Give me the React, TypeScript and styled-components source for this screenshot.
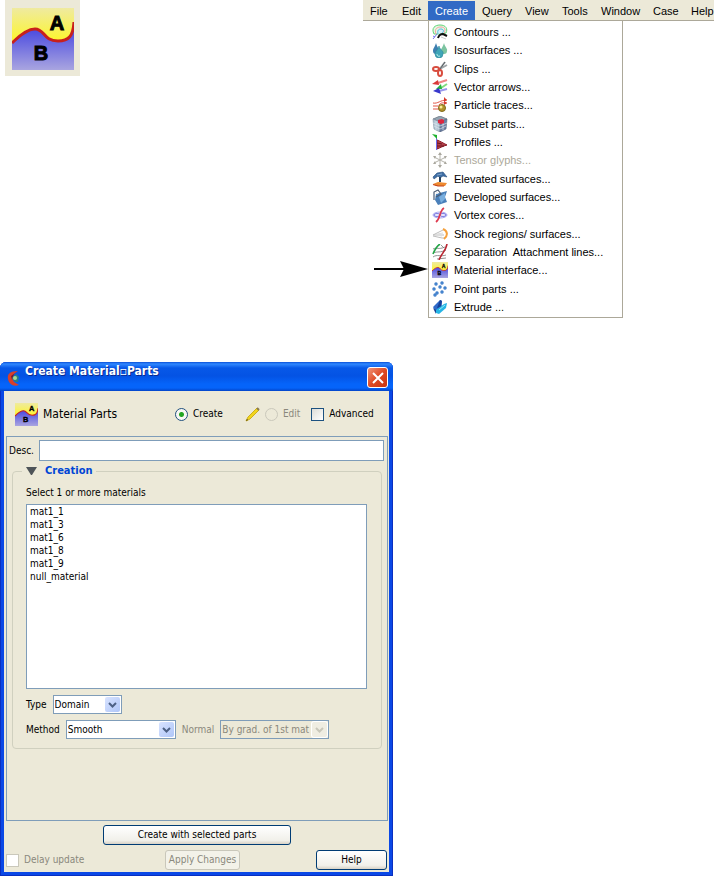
import React from "react";
import styled, { createGlobalStyle, css } from "styled-components";

const menuFont = `"Liberation Sans", Arial, sans-serif`;
const dialogFont = `"DejaVu Sans Condensed", "DejaVu Sans", sans-serif`;

const GlobalStyle = createGlobalStyle`
  * { box-sizing: border-box; }
  body {
    margin: 0;
    background: #fff;
    color: #000;
    font-family: ${menuFont};
    font-size: 11px;
    line-height: 14px;
  }
  button, input, select, option { font: inherit; color: inherit; }
`;

/* ---------- Icons ---------- */

const MaterialIcon = ({ size }: { size: number }) => (
  <svg width={size} height={size} viewBox="0 0 62 62" aria-hidden="true">
    <defs>
      <linearGradient id={`sky${size}`} x1="0" y1="0" x2="0" y2="1">
        <stop offset="0" stopColor="#efeaa0" />
        <stop offset="0.5" stopColor="#fcf534" />
      </linearGradient>
      <linearGradient id={`sea${size}`} x1="0" y1="0" x2="0" y2="1">
        <stop offset="0" stopColor="#3a3ae0" />
        <stop offset="1" stopColor="#a9a5e0" />
      </linearGradient>
    </defs>
    <rect width="62" height="62" fill={`url(#sky${size})`} />
    <path d="M0 35C9 26 16 21 23 21C33 21 31 33 46 33C57 33 61 28 62 14V62H0Z" fill={`url(#sea${size})`} />
    <path d="M0 35C9 26 16 21 23 21C33 21 31 33 46 33C57 33 61 28 62 14" fill="none" stroke="#c8201c" strokeWidth="3" />
    <text x="45" y="22" textAnchor="middle" fontFamily="Liberation Sans, sans-serif" fontWeight="700" fontSize="20" stroke="#000">A</text>
    <text x="29" y="52" textAnchor="middle" fontFamily="Liberation Sans, sans-serif" fontWeight="700" fontSize="20" stroke="#000">B</text>
  </svg>
);

const Glyph = ({ children }: { children: React.ReactNode }) => (
  <svg width="16" height="16" viewBox="0 0 16 16" fill="none" aria-hidden="true">
    {children}
  </svg>
);

const icons: Record<string, React.ReactNode> = {
  contours: (
    <Glyph>
      <path d="M2 10C-1 4 3 1 8 1C14 1 16 5 14 9L9 10Z" fill="#e4f9e4" stroke="#62d478" />
      <path d="M4 10C2 5 5 3 9 3C13 3 14 6 12 9" stroke="#f4a0a0" />
      <path d="M6 10C5 6 7 5 9 5C12 5 12 8 10 9" fill="#d7f0fb" stroke="#4db8e4" />
      <path d="M1 15L5 10M3 13L1 12" stroke="#7474ee" />
      <path d="M6 14C7 11 9 10 11 10L15 12" stroke="#111" strokeWidth="2" />
      <path d="M9 13L14 15" stroke="#ccc" />
    </Glyph>
  ),
  iso: (
    <Glyph>
      <path d="M4 1C5 5 7 6 7 9A3 3 0 0 1 1 9C1 6 3 5 4 1Z" fill="#3d7fb0" />
      <path d="M12 1C13 5 16 7 15 9A3 3 0 0 1 9 9C9 6 11 5 12 1Z" fill="#7cc4a0" />
      <path d="M7 4C8 8 12 9 11 12A4 4 0 0 1 3 12C3 9 6 8 7 4Z" fill="#3fa5b8" stroke="#2f8499" strokeWidth=".6" />
      <path d="M5 12A2 2 0 0 0 8 14" stroke="#b2ece8" />
    </Glyph>
  ),
  clips: (
    <Glyph>
      <path d="M13 1L7 9M15 4L6 9" stroke="#9ea4a7" strokeWidth="2" />
      <path d="M13 1L8 8" stroke="#596064" />
      <ellipse cx="4" cy="8" rx="3" ry="2" stroke="#d84c3e" strokeWidth="2" />
      <ellipse cx="8" cy="12" rx="2" ry="3" stroke="#d84c3e" strokeWidth="2" />
    </Glyph>
  ),
  vector: (
    <Glyph>
      <path d="M15 1L6 4" stroke="#ef8585" strokeWidth="2" />
      <path d="M0 5L6 1L7 6Z" fill="#d93939" />
      <path d="M15 5L9 9" stroke="#80dc80" strokeWidth="2" />
      <path d="M4 10L9 5L10 10Z" fill="#25b440" />
      <path d="M15 10L7 12" stroke="#9898ec" strokeWidth="2" />
      <path d="M1 12L7 9L9 15Z" fill="#3838cc" />
    </Glyph>
  ),
  particle: (
    <Glyph>
      <path d="M1 6C6 7 8 3 15 3M1 9H7M1 12H7M7 8C9 5 12 6 15 6" stroke="#e15445" />
      <path d="M12 0L15 3L12 5M12 4L15 6L12 8" fill="#d63a2d" />
      <circle cx="10" cy="11" r="3.5" fill="#b0922a" stroke="#806a1a" />
      <circle cx="9" cy="10" r="1.5" fill="#f8ec94" />
    </Glyph>
  ),
  subset: (
    <Glyph>
      <path d="M1 3L8 0L15 3L8 6Z" fill="#93a3b0" stroke="#526270" strokeWidth=".6" />
      <path d="M1 3L8 6V16L2 13Z" fill="#b3c5d4" stroke="#7e8da0" strokeWidth=".6" />
      <path d="M8 6L15 3L14 13L8 16Z" fill="#6c7fa4" stroke="#50617c" strokeWidth=".6" />
      <path d="M1 7L8 10L15 7M2 10L8 13L14 10M4 5V14M11 5V14" stroke="#dbe5ed" strokeWidth=".7" />
      <path d="M6 4L10 3L12 4V7L9 8L6 7Z" fill="#dd2740" />
    </Glyph>
  ),
  profiles: (
    <Glyph>
      <path d="M5 6C8 7 11 9 15 11C11 12 8 14 5 15Z" fill="#b4404a" stroke="#8a1d28" />
      <path d="M5 9L10 10M5 12H12" stroke="#6d1720" />
      <path d="M4.5 1V16" stroke="#6a6af0" />
      <path d="M0 0L5 1V5Z" fill="#1eb12e" />
    </Glyph>
  ),
  tensor: (
    <Glyph>
      <path d="M8 1V15M2 5L14 11M14 5L2 11" stroke="#b5b3ab" />
      <path d="M6 3L8 0L10 3ZM6 13L8 16L10 13ZM1 4L4 4L3 7ZM15 4L12 4L13 7ZM1 12L3 9L4 12ZM15 12L13 9L12 12Z" fill="#aaa89f" />
    </Glyph>
  ),
  elevated: (
    <Glyph>
      <path d="M1 6L5 2L11 1L15 6L11 5L8 7L6 5L2 8Z" fill="#3f6ea4" stroke="#254d7c" strokeWidth=".6" />
      <path d="M5 4L10 3" stroke="#7fa6cf" />
      <path d="M8 6V11" stroke="#26425f" strokeWidth="2" />
      <path d="M1 13L6 11L15 12L13 15H4Z" fill="#ee8a30" />
      <path d="M1 13.5L6 15H12" stroke="#c4431d" strokeWidth="1.2" />
    </Glyph>
  ),
  developed: (
    <Glyph>
      <path d="M4 5L15 2L13 8L15 13L6 16L3 11Z" fill="#4a80ba" />
      <path d="M7 8L13 4V10L9 14Z" fill="#79aede" />
      <path d="M2 11V3L6 1L9 5L4 8" stroke="#4a5c76" strokeWidth="1.2" />
      <circle cx="5" cy="4" r="1" fill="#eee" />
    </Glyph>
  ),
  vortex: (
    <Glyph>
      <ellipse cx="8" cy="8" rx="7" ry="3" fill="#eeeefe" stroke="#a8a8f2" />
      <ellipse cx="5" cy="8" rx="3" ry="1.5" stroke="#7a7ade" />
      <ellipse cx="11" cy="8" rx="3" ry="1.5" stroke="#7a7ade" />
      <path d="M12 1C7 4 9 11 4 15" stroke="#df3a4f" strokeWidth="1.7" />
    </Glyph>
  ),
  shock: (
    <Glyph>
      <path d="M1 9L11 4M1 9H12M1 10L10 12H13" stroke="#bcbcbc" />
      <path d="M5 8L11 7M4 9L10 10" stroke="#ddd" />
      <path d="M11 3C16 5 16 10 12 13" stroke="#f5a13d" strokeWidth="2" />
    </Glyph>
  ),
  separation: (
    <Glyph>
      <path d="M1 5C5 3 6 6 13 3M1 9C6 7 8 9 14 6M1 13C5 10 9 13 14 11M5 15L14 14M9 1L12 4" stroke="#777" strokeWidth=".8" />
      <path d="M1 10C3 5 5 2 8 0" stroke="#23a447" strokeWidth="1.6" />
      <path d="M15 0C14 7 9 10 7 16" stroke="#b92531" strokeWidth="1.6" />
    </Glyph>
  ),
  material: <MaterialIcon size={16} />,
  points: (
    <Glyph>
      {[[4, 3], [10, 2], [2, 8], [8, 6], [13, 7], [5, 12], [10, 11], [3, 14]].map(([x, y]) => (
        <g key={`${x}-${y}`}>
          <circle cx={x} cy={y} r="1.7" fill="#3375c5" />
          <circle cx={x} cy={y} r=".6" fill="#82b7ee" />
        </g>
      ))}
    </Glyph>
  ),
  extrude: (
    <Glyph>
      <path d="M1 8L8 1C11 0 9 6 10 7L4 13Z" fill="#2f69c8" />
      <path d="M8 1L10 2L9 8L5 9Z" fill="#163f99" />
      <path d="M4 11L12 5L15 4L14 9L7 15L4 14Z" fill="#25b5e5" />
      <path d="M1 9L4 11V15Z" fill="#153f91" />
      <path d="M7 11L13 6" stroke="#9aeaf5" />
    </Glyph>
  ),
};

const Arrow = () => (
  <svg width="54" height="16" viewBox="0 0 54 16" aria-hidden="true">
    <path d="M0 8H30" stroke="#000" strokeWidth="2" />
    <path d="M26 0L54 8L26 16L30 8Z" />
  </svg>
);

const Pencil = () => (
  <svg width="15" height="15" viewBox="0 0 15 15" aria-hidden="true">
    <path d="M1 14L3 10L12 1L14 3L5 12Z" fill="#f2d51d" stroke="#cdb01c" />
    <path d="M1 14L2 12L3 13Z" fill="#403616" />
    <path d="M12 1L14 3" stroke="#887a50" strokeWidth="2" />
  </svg>
);

const AppMark = () => (
  <svg width="13" height="17" viewBox="0 0 13 17" aria-hidden="true">
    <path d="M11 1C3 1 0 4 1 9C2 14 6 17 12 15L7 12L5 8L7 4Z" fill="#d8402a" />
    <path d="M11 1L4 6L5 10L7 4Z" fill="#701d31" />
    <path d="M5 8L9 4L12 7L11 12L8 12Z" fill="#287f83" />
    <circle cx="8" cy="8" r="2" fill="#a6d995" />
  </svg>
);

const Chevron = () => (
  <svg width="9" height="6" viewBox="0 0 9 6" fill="none" aria-hidden="true">
    <path d="M1 1L4.5 4.5L8 1" stroke="currentColor" strokeWidth="2" />
  </svg>
);

/* ---------- Menu ---------- */

const Page = styled.main`
  display: flex;
  flex-direction: column;
  gap: 44px;
`;

const TopArea = styled.section`
  display: grid;
  grid-template-columns: 358px 1fr;
  align-items: start;
  padding-left: 5px;
`;

const IconTile = styled.div`
  display: grid;
  justify-content: start;
  width: 75px;
  padding: 8px 7px 6px;
  background: #ece9d8;
`;

const MenuBar = styled.nav`
  display: grid;
  grid-template-columns: 32fr 33fr 47fr 43fr 37fr 39fr 52fr 38fr 30fr;
  height: 21px;
  padding-top: 1px;
  background: #ece9d8;
  border-bottom: 1px solid #aca899;
`;

const MenuTitle = styled.button<{ $open?: boolean }>`
  min-width: 0;
  padding: 0 0 0 7px;
  border: 0;
  text-align: left;
  white-space: nowrap;
  background: ${(p) => (p.$open ? "#316ac5" : "transparent")};
  color: ${(p) => (p.$open ? "#fff" : "#000")};
`;

const MenuDrop = styled.div`
  display: flex;
  align-items: flex-end;
  padding-left: 11px;
`;

const ArrowSlot = styled.div`
  display: flex;
  padding-bottom: 41px;
`;

const MenuList = styled.div`
  display: grid;
  grid-auto-rows: 1fr;
  width: 195px;
  height: 297px;
  padding: 2px 0 1px;
  border: solid #aca899;
  border-width: 0 1px 1px;
`;

const MenuEntry = styled.button`
  display: flex;
  align-items: center;
  gap: 6px;
  min-height: 0;
  padding: 0 0 0 3px;
  border: 0;
  background: none;
  white-space: pre;
  text-align: left;
  &:disabled { color: #aca899; }
`;

/* ---------- Dialog ---------- */

const Dialog = styled.section`
  width: 100%;
  max-width: 393px;
  padding: 0 4px 4px;
  border-radius: 6px 6px 0 0;
  background: #0a48e6;
  box-shadow: inset 1px 0 #0a2fc0, inset -1px -1px #0a2fc0;
  font-family: ${dialogFont};
  font-size: 10px;
`;

const TitleBar = styled.header`
  display: flex;
  align-items: center;
  height: 29px;
  margin: 0 -4px;
  padding: 0 5px 0 7px;
  border-radius: 6px 6px 0 0;
  background: linear-gradient(#0a50d8, #3088ff 2px, #0758e8 6px, #0453e4 14px, #0564fa 22px, #0564fa 26px, #0344c8);
`;

const AppMarkSlot = styled.span`
  display: flex;
  padding-top: 3px;
`;

const Title = styled.h1`
  flex: 1;
  margin: 0;
  padding: 0 0 12px 5px;
  color: #fff;
  font-size: 12px;
  font-weight: 700;
  line-height: 16px;
  text-shadow: 1px 1px #0a2a90;
`;

const CloseButton = styled.button`
  display: grid;
  place-items: center;
  width: 21px;
  height: 21px;
  margin-top: 2px;
  padding: 0;
  border: 1px solid #fff;
  border-radius: 3px;
  background: linear-gradient(135deg, #f09478, #df4a25 50%, #c9350f);
`;

const Body = styled.div`
  padding: 11px 1px 2px 2px;
  background: #ece9d8;
`;

const Options = styled.div`
  display: flex;
  align-items: center;
  height: 24px;
  padding-left: 9px;
`;

const PartName = styled.h2`
  width: 137px;
  margin: 0;
  padding-left: 5px;
  font-size: 12px;
  font-weight: 400;
`;

const Choice = styled.label<{ $dim?: boolean; $gap?: number }>`
  display: flex;
  align-items: center;
  gap: 5px;
  margin-right: ${(p) => p.$gap ?? 0}px;
  color: ${(p) => (p.$dim ? "#8a887c" : "#000")};
`;

const PencilSlot = styled.span`
  display: flex;
  padding-right: 5px;
`;

const Radio = styled.input`
  appearance: none;
  width: 13px;
  height: 13px;
  margin: 0;
  border: 1px solid #21517f;
  border-radius: 50%;
  background: #f8f8f4;
  &:checked { background: radial-gradient(circle, #22a522 0 2px, #f8f8f4 3px); }
  &:disabled { border-color: #cac8bb; background: #ece9d8; }
`;

const Tick = styled.input`
  appearance: none;
  width: 13px;
  height: 13px;
  margin: 0;
  border: 1px solid #1c5180;
  background: linear-gradient(135deg, #dcdcd7, #fff);
  &:disabled { border-color: #cac8bb; background: #fff; }
`;

const Panel = styled.div`
  display: flex;
  flex-direction: column;
  min-height: 385px;
  margin-top: 10px;
  padding: 3px 3px 0 2px;
  border: 1px solid #7f9db9;
`;

const DescRow = styled.label`
  display: flex;
  align-items: center;
  gap: 5px;
`;

const DescInput = styled.input`
  flex: 1;
  min-width: 0;
  height: 21px;
  border: 1px solid #7f9db9;
  background: #fff;
`;

const Group = styled.fieldset`
  min-width: 0;
  margin: 3px 2px 0 3px;
  padding: 8px 14px 9px 13px;
  border: 1px solid #d0d0bf;
  border-radius: 4px;
`;

const GroupTitle = styled.legend`
  margin-left: -4px;
  padding: 0 3px 0 4px;
`;

const Toggle = styled.button`
  display: flex;
  align-items: center;
  gap: 8px;
  padding: 0;
  border: 0;
  background: none;
  color: #0046d5;
  font-size: 11px;
  font-weight: 700;
`;

const FieldLabel = styled.label<{ $dim?: boolean }>`
  color: ${(p) => (p.$dim ? "#8a887c" : "#000")};
`;

const MaterialList = styled.select`
  display: block;
  width: 100%;
  height: 185px;
  margin-top: 4px;
  padding: 1px 3px;
  border: 1px solid #7f9db9;
  border-radius: 0;
  background: #fff;
  overflow: hidden;
  option { min-height: 13px; padding: 0; }
`;

const FieldRow = styled.div`
  display: flex;
  align-items: center;
  gap: 6px;
  margin-top: 6px;
`;

const Picker = styled.span<{ $width: number; $off?: boolean }>`
  display: grid;
  grid-template-columns: 1fr 18px;
  align-items: center;
  width: ${(p) => p.$width}px;
  height: 19px;
  border: 1px solid #7f9db9;
  background: ${(p) => (p.$off ? "#ece9d8" : "#fff")};
  > select {
    grid-area: 1 / 1 / 2 / 3;
    appearance: none;
    width: 100%;
    height: 17px;
    padding: 0 16px 0 1px;
    border: 0;
    border-radius: 0;
    background: transparent;
    opacity: 1;
    color: ${(p) => (p.$off ? "#8a887c" : "#000")};
  }
`;

const PickerArrow = styled.span<{ $off?: boolean }>`
  display: grid;
  place-items: center;
  grid-area: 1 / 2;
  width: 15px;
  height: 15px;
  margin-left: 2px;
  border-radius: 2px;
  pointer-events: none;
  ${(p) =>
    p.$off
      ? css`background: #efede2; color: #c9c7ba; box-shadow: 0 0 0 1px #fff;`
      : css`background: linear-gradient(135deg, #d8e3ff, #afc6f8); color: #4d6185;`}
`;

const PushButton = styled.button<{ $width: number }>`
  width: ${(p) => p.$width}px;
  height: 20px;
  padding: 0;
  border: 1px solid #003c74;
  border-radius: 3px;
  background: linear-gradient(#fff, #f1f0ea 80%, #d8d2c6);
  white-space: nowrap;
  &:disabled {
    border-color: #c9c7ba;
    background: #f3f2e9;
    color: #8a887c;
  }
`;

const CreateRow = styled.div`
  display: flex;
  justify-content: center;
  padding-top: 4px;
`;

const Footer = styled.footer`
  display: flex;
  align-items: center;
  margin-top: 5px;
  padding-right: 1px;
  > :first-child { width: 159px; margin: 0; }
  > :last-child { margin-left: auto; }
`;

const titles = ["File", "Edit", "Create", "Query", "View", "Tools", "Window", "Case", "Help"];

const entries: { icon: string; text: string; off?: boolean }[] = [
  { icon: "contours", text: "Contours ..." },
  { icon: "iso", text: "Isosurfaces ..." },
  { icon: "clips", text: "Clips ..." },
  { icon: "vector", text: "Vector arrows..." },
  { icon: "particle", text: "Particle traces..." },
  { icon: "subset", text: "Subset parts..." },
  { icon: "profiles", text: "Profiles ..." },
  { icon: "tensor", text: "Tensor glyphs...", off: true },
  { icon: "elevated", text: "Elevated surfaces..." },
  { icon: "developed", text: "Developed surfaces..." },
  { icon: "vortex", text: "Vortex cores..." },
  { icon: "shock", text: "Shock regions/ surfaces..." },
  { icon: "separation", text: "Separation  Attachment lines..." },
  { icon: "material", text: "Material interface..." },
  { icon: "points", text: "Point parts ..." },
  { icon: "extrude", text: "Extrude ..." },
];

const materials = ["mat1_1", "mat1_3", "mat1_6", "mat1_8", "mat1_9", "null_material"];

export default function App() {
  return (
    <Page>
      <GlobalStyle />
      <TopArea>
        <IconTile>
          <MaterialIcon size={62} />
        </IconTile>
        <div>
          <MenuBar>
            {titles.map((t) => (
              <MenuTitle key={t} $open={t === "Create"}>{t}</MenuTitle>
            ))}
          </MenuBar>
          <MenuDrop>
            <ArrowSlot><Arrow /></ArrowSlot>
            <MenuList>
              {entries.map((e) => (
                <MenuEntry key={e.text} disabled={e.off}>
                  {icons[e.icon]}
                  {e.text}
                </MenuEntry>
              ))}
            </MenuList>
          </MenuDrop>
        </div>
      </TopArea>

      <Dialog>
        <TitleBar>
          <AppMarkSlot><AppMark /></AppMarkSlot>
          <Title>Create Material▫Parts</Title>
          <CloseButton aria-label="Close">
            <svg width="12" height="12" viewBox="0 0 12 12" aria-hidden="true">
              <path d="M1 1L11 11M11 1L1 11" stroke="#fff" strokeWidth="2" />
            </svg>
          </CloseButton>
        </TitleBar>
        <Body>
          <Options>
            <MaterialIcon size={23} />
            <PartName>Material Parts</PartName>
            <Choice $gap={22}>
              <Radio type="radio" name="mode" defaultChecked />
              Create
            </Choice>
            <PencilSlot><Pencil /></PencilSlot>
            <Choice $dim $gap={11}>
              <Radio type="radio" name="mode" disabled />
              Edit
            </Choice>
            <Choice>
              <Tick type="checkbox" />
              Advanced
            </Choice>
          </Options>
          <Panel>
            <DescRow>
              Desc.
              <DescInput type="text" />
            </DescRow>
            <Group>
              <GroupTitle>
                <Toggle>
                  <svg width="11" height="8" viewBox="0 0 11 8" aria-hidden="true">
                    <path d="M0 0H11L6 8H5Z" fill="#4e5458" />
                  </svg>
                  Creation
                </Toggle>
              </GroupTitle>
              <FieldLabel htmlFor="materials">Select 1 or more materials</FieldLabel>
              <MaterialList id="materials" multiple>
                {materials.map((m) => <option key={m}>{m}</option>)}
              </MaterialList>
              <FieldRow>
                <FieldLabel htmlFor="type">Type</FieldLabel>
                <Picker $width={69}>
                  <select id="type"><option>Domain</option></select>
                  <PickerArrow><Chevron /></PickerArrow>
                </Picker>
              </FieldRow>
              <FieldRow>
                <FieldLabel htmlFor="method">Method</FieldLabel>
                <Picker $width={110}>
                  <select id="method"><option>Smooth</option></select>
                  <PickerArrow><Chevron /></PickerArrow>
                </Picker>
                <FieldLabel htmlFor="normal" $dim>Normal</FieldLabel>
                <Picker $width={109} $off>
                  <select id="normal" disabled><option>By grad. of 1st mat</option></select>
                  <PickerArrow $off><Chevron /></PickerArrow>
                </Picker>
              </FieldRow>
            </Group>
          </Panel>
          <CreateRow>
            <PushButton $width={188}>Create with selected parts</PushButton>
          </CreateRow>
          <Footer>
            <Choice $dim>
              <Tick type="checkbox" disabled />
              Delay update
            </Choice>
            <PushButton $width={75} disabled>Apply Changes</PushButton>
            <PushButton $width={71}>Help</PushButton>
          </Footer>
        </Body>
      </Dialog>
    </Page>
  );
}
